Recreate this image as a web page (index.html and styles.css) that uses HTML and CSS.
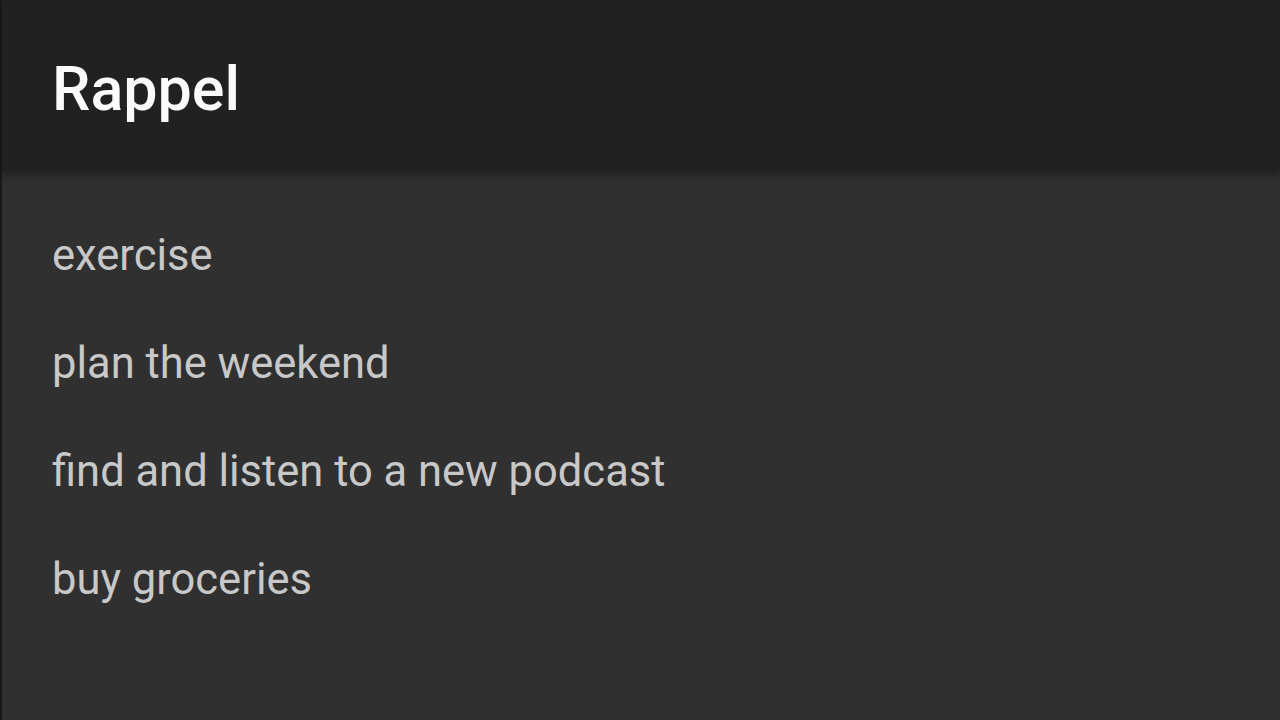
FILE: index.html
```
<html>
<head>
    <title>Rappel</title>
    <link rel="stylesheet" href="styles.css">
</head>
<body>
    <div class="app">
        <div class="app-bar">
            <span class="title">Rappel</span>
        </div>
        <div class="list">
            <div class="item">exercise</div>
            <div class="item">plan the weekend</div>
            <div class="item">find and listen to a new podcast</div>
            <div class="item">buy groceries</div>
        </div>
    </div>
</body>
</html>
```

FILE: styles.css
```
html, body {
    margin: 0;
    height: 100%;
    background-color: #303030;
    font-family: Roboto, "Noto Sans", sans-serif;
}
.app {
    height: 100%;
    border-left: 2px solid #1a1a1a;
    display: flex;
    flex-direction: column;
}
.app-bar {
    background-color: #212121;
    height: 166px;
    padding: 6px 0 0 50px;
    display: flex;
    align-items: center;
    box-shadow: 0 3px 8px rgba(0, 0, 0, 0.35);
    position: relative;
}
.title {
    color: #fafafa;
    font-size: 61px;
    font-weight: 500;
}
.list {
    padding: 30px 0 0 50px;
}
.item {
    color: #c8c8c8;
    font-size: 43.5px;
    line-height: 108px;
}
```
